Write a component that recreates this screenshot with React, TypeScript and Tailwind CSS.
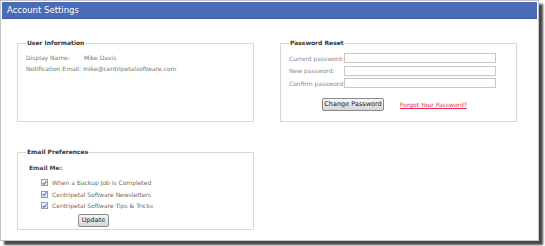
import React from 'react';

const font = { fontFamily: '"DejaVu Sans", Verdana, sans-serif' };

const Check: React.FC<{ label: string }> = ({ label }) => (
  <div className="flex items-center h-[11.5px]">
    <span className="w-[7px] h-[7px] border border-[#8f9cb3] bg-gradient-to-b from-[#f4f6fa] to-[#dde3ee] flex items-center justify-center">
      <svg viewBox="0 0 8 8" className="w-[6px] h-[6px]">
        <path d="M1 4.2 L3 6.4 L7 1.2" stroke="#2d4fa0" strokeWidth="1.6" fill="none" />
      </svg>
    </span>
    <span className="ml-[4px] text-[6px] text-[#6a6a6a] whitespace-nowrap">{label}</span>
  </div>
);

const Btn: React.FC<{ children: React.ReactNode; w: string }> = ({ children, w }) => (
  <button
    className={`${w} h-[13px] border border-[#8a8a8a] rounded-[2px] bg-gradient-to-b from-[#f7f7f7] to-[#d6d6d6] text-[6.5px] text-[#222] leading-none whitespace-nowrap`}
  >
    {children}
  </button>
);

export default function App() {
  return (
    <div className="w-[545px] h-[246px] bg-white" style={font}>
      <div className="w-[539px] h-[241px] border border-[#c4c4c4] p-px bg-white shadow-[4px_4px_2px_rgba(40,40,40,0.85)]">
        <div className="h-[17px] bg-[#4a6bb5] flex items-center pl-[5px] text-white text-[8.5px] border-b border-[#3c5a9e]">
          Account Settings
        </div>

        <div className="pl-[15px] pt-[20px] grid grid-cols-[237px_237px] gap-x-[26px] gap-y-[26px] items-start">
          <fieldset className="h-[83px] border border-[#d8d8d8] px-[8px]">
            <legend className="px-[1px] text-[6px] font-bold text-[#333] leading-[8px]">User Information</legend>
            <div className="mt-[5px] text-[6px] text-[#777] leading-[11px] grid grid-cols-[auto_1fr] gap-x-[2px] whitespace-nowrap">
              <span>Display Name:</span>
              <span className="pl-[1px]">Mike Davis</span>
              <span>Notification Email:</span>
              <span>mike@centripetalsoftware.com</span>
            </div>
          </fieldset>

          <fieldset className="h-[83px] border border-[#d8d8d8] px-[8px]">
            <legend className="px-[1px] text-[6px] font-bold text-[#333] leading-[8px]">Password Reset</legend>
            <div className="mt-[6px] flex flex-col gap-[2.5px] text-[6px] text-[#888]">
              {['Current password:', 'New password:', 'Confirm password:'].map((l) => (
                <div key={l} className="flex items-center">
                  <span className="w-[55px] whitespace-nowrap">{l}</span>
                  <input type="password" className="w-[152px] h-[10px] border border-[#c8c8c8] bg-white" />
                </div>
              ))}
            </div>
            <div className="mt-[10px] flex items-center">
              <div className="ml-[33px] flex">
                <Btn w="w-[62px]">Change Password</Btn>
              </div>
              <a className="ml-[16px] text-[6px] text-[#e2314f] underline whitespace-nowrap">Forgot Your Password?</a>
            </div>
          </fieldset>

          <fieldset className="h-[82px] border border-[#d8d8d8] px-[8px]">
            <legend className="px-[1px] text-[6px] font-bold text-[#333] leading-[8px]">Email Preferences</legend>
            <div className="mt-[7px] ml-[3px] text-[6px] font-bold text-[#444]">Email Me:</div>
            <div className="mt-[5px] ml-[15px]">
              <Check label="When a Backup Job is Completed" />
              <Check label="Centripetal Software Newsletters" />
              <Check label="Centripetal Software Tips &amp; Tricks" />
            </div>
            <div className="ml-[52px] mt-[2px] flex">
              <Btn w="w-[31px]">Update</Btn>
            </div>
          </fieldset>
        </div>
      </div>
    </div>
  );
}
